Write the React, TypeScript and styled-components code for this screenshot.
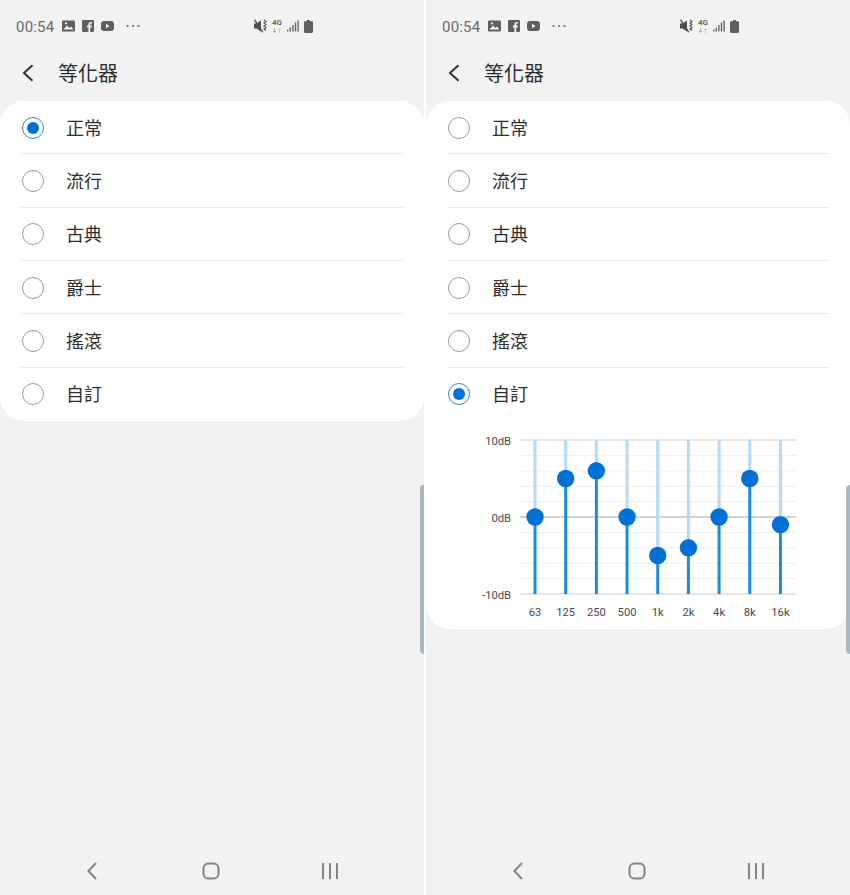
import React from "react";
import styled, { createGlobalStyle } from "styled-components";

const Global = createGlobalStyle`
  html, body { margin: 0; padding: 0; background: #fff; }
  * { box-sizing: border-box; }
`;

const FONT = `Roboto, "Noto Sans CJK TC", "Liberation Sans", sans-serif`;

const Stage = styled.div`
  width: 850px;
  height: 895px;
  display: flex;
  justify-content: space-between;
  background: #fff;
  font-family: ${FONT};
  overflow: hidden;
`;
const Phone = styled.div`
  position: relative;
  width: 424px;
  height: 895px;
  background: #f2f2f2;
  display: flex;
  flex-direction: column;
`;
const StatusBar = styled.div`
  height: 52px;
  display: flex;
  align-items: center;
  padding-left: 16px;
  color: #666;
`;
const Clock = styled.span`
  font-size: 15px;
  letter-spacing: 0.2px;
  width: 46px;
  color: #6a6a6a;
  margin-top: 2px;
`;
const NotifIcons = styled.div`
  display: flex;
  align-items: center;
  gap: 7px;
  width: 192px;
`;
const SysIcons = styled.div`
  display: flex;
  align-items: center;
  gap: 4px;
`;
const NetType = styled.div`
  width: 12px;
  display: flex;
  flex-direction: column;
  align-items: center;
  gap: 2px;
  font-size: 8px;
  line-height: 7px;
  font-weight: 700;
  color: #6a6a6a;
`;
const Header = styled.div`
  height: 49px;
  display: flex;
  align-items: center;
  padding: 0 0 8px 22px;
`;
const Title = styled.h1`
  margin: 2px 0 0 24px;
  font-size: 20px;
  font-weight: 400;
  color: #2b2b2b;
  line-height: 28px;
`;
const Card = styled.div`
  background: #fff;
  border-radius: 24px;
`;
const Row = styled.div`
  height: 53.33px;
  position: relative;
  display: flex;
  align-items: center;
  padding-left: 22px;
  &:not(:last-of-type)::after {
    content: "";
    position: absolute;
    left: 21px;
    right: 21px;
    bottom: 0;
    height: 1px;
    background: #ebebeb;
  }
`;
const Radio = styled.span<{ $on?: boolean }>`
  width: 22px;
  height: 22px;
  border-radius: 50%;
  border: 1px solid ${(p) => (p.$on ? "#2a87da" : "#9a9a9a")};
  display: flex;
  align-items: center;
  justify-content: center;
  &::after {
    content: "";
    width: 12px;
    height: 12px;
    border-radius: 50%;
    background: ${(p) => (p.$on ? "#0072d6" : "transparent")};
  }
`;
const Label = styled.span`
  margin: 2px 0 0 22px;
  font-size: 18px;
  color: #2e2e2e;
  line-height: 24px;
`;
const ChartSvg = styled.svg`
  display: block;
  width: 424px;
  height: 208.5px;
  font-family: ${FONT};
`;
const ChartText = styled.text`
  font-size: 11.2px;
  fill: #4a4a4a;
`;
const NavBar = styled.div`
  margin-top: auto;
  height: 48px;
  padding-right: 2px;
  display: grid;
  grid-template-columns: repeat(3, 119px);
  justify-content: center;
  align-items: center;
  justify-items: center;
`;
const Handle = styled.div`
  position: absolute;
  right: 0;
  top: 485px;
  width: 4px;
  height: 169px;
  background: #a9b8c0;
  border-radius: 4px 0 0 4px;
`;

const ImageIcon = () => (
  <svg width="13" height="12" viewBox="0 0 13 12">
    <rect x="0" y="0.5" width="13" height="11" rx="1.2" fill="#5f5f5f" />
    <path d="M1.5 9.5 5 5.5l2.4 2.6L9 6.6l2.5 2.9z" fill="#f2f2f2" />
    <circle cx="4" cy="3.4" r="1.1" fill="#f2f2f2" />
  </svg>
);
const FbIcon = () => (
  <svg width="12" height="12" viewBox="0 0 12 12">
    <rect width="12" height="12" rx="1.2" fill="#5f5f5f" />
    <path d="M8.2 12V7.4h1.5l.2-1.8H8.2V4.5c0-.5.2-.9.9-.9h1V2c-.3 0-.8-.1-1.3-.1-1.4 0-2.4.9-2.4 2.4v1.3H4.9v1.8h1.5V12z" fill="#f2f2f2" />
  </svg>
);
const YtIcon = () => (
  <svg width="13" height="10" viewBox="0 0 13 10">
    <rect width="13" height="10" rx="3" fill="#5f5f5f" />
    <path d="M5 2.8 8.6 5 5 7.2z" fill="#f2f2f2" />
  </svg>
);
const DotsIcon = () => (
  <svg width="14" height="4" viewBox="0 0 14 4" style={{ marginLeft: 5 }}>
    <g fill="#6a6a6a">
      <circle cx="1.5" cy="2" r="1.1" />
      <circle cx="7" cy="2" r="1.1" />
      <circle cx="12.5" cy="2" r="1.1" />
    </g>
  </svg>
);
const MuteIcon = () => (
  <svg width="13" height="14" viewBox="0 0 13 14">
    <path d="M0 4.5h2.5L7 1.5v11l-4.500-3H0z" fill="#4f4f4f" />
    <path d="M0.8 1.2 8.500 12.800" stroke="#4f4f4f" strokeWidth="1.400" strokeLinecap="round" />
    <path d="M10 1l2 1.500-2 1.500 2 1.500-2 1.500 2 1.500-2 1.500 2 1.500" fill="none" stroke="#4f4f4f" strokeWidth="1.200" />
  </svg>
);
const NetArrows = () => (
  <svg width="10" height="5" viewBox="0 0 10 5">
    <path d="M2.500 0v4M1 2.800l1.500 1.700L4 2.800" fill="none" stroke="#a8a8a8" strokeWidth="1" />
    <path d="M7.500 5V1M6 2.200 7.500 .5 9 2.200" fill="none" stroke="#c4c4c4" strokeWidth="1" />
  </svg>
);
const SignalIcon = () => (
  <svg width="12" height="12" viewBox="0 0 12 12">
    <g fill="#666">
      <rect x="0" y="9.500" width="1.400" height="2" />
      <rect x="2.600" y="7.500" width="1.400" height="4" />
      <rect x="5.200" y="5" width="1.400" height="6.500" />
      <rect x="7.800" y="2.500" width="1.400" height="9" />
      <rect x="10.400" y="0.500" width="1.400" height="11" />
    </g>
  </svg>
);
const BatteryIcon = () => (
  <svg width="9" height="13" viewBox="0 0 9 13" style={{ marginLeft: 1 }}>
    <path d="M3 0h3v1.200h1.800c.7 0 1.200.5 1.200 1.200v9.400c0 .7-.5 1.200-1.200 1.200H1.200C.5 13 0 12.500 0 11.800V2.400c0-.7.5-1.200 1.200-1.200H3z" fill="#5f5f5f" />
  </svg>
);
const BackIcon = () => (
  <svg width="12" height="18" viewBox="0 0 12 18">
    <path d="M10.500 1.200 2 9l8.500 7.800" fill="none" stroke="#333" strokeWidth="2" />
  </svg>
);
const NavBack = () => (
  <svg width="12" height="18" viewBox="0 0 12 18">
    <path d="M10 1 2.400 9l7.600 8" fill="none" stroke="#858585" strokeWidth="2" />
  </svg>
);
const NavHome = () => (
  <svg width="18" height="18" viewBox="0 0 18 18">
    <rect x="1.500" y="1.500" width="15" height="15" rx="5" fill="none" stroke="#858585" strokeWidth="2" />
  </svg>
);
const NavRecent = () => (
  <svg width="16" height="16" viewBox="0 0 16 16">
    <g fill="#858585">
      <rect x="0" width="2" height="16" />
      <rect x="7" width="2" height="16" />
      <rect x="14" width="2" height="16" />
    </g>
  </svg>
);

const BANDS: [string, number][] = [
  ["63", 0], ["125", 5], ["250", 6], ["500", 0], ["1k", -5],
  ["2k", -4], ["4k", 0], ["8k", 5], ["16k", -1],
];
const X0 = 109;
const DX = 30.68;
const TOP = 19;
const MID = 96;
const BOT = 173;
const yOf = (db: number) => MID - db * 7.7;

const EqChart = () => (
  <ChartSvg viewBox="0 0 424 208.500">
    {Array.from({ length: 11 }, (_, i) => {
      const y = TOP + i * 15.4;
      const major = i === 0 || i === 10;
      return (
        <line
          key={i}
          x1="94"
          x2="370"
          y1={y}
          y2={y}
          stroke={i === 5 ? "#c4c4c4" : major ? "#cbcbce" : "#eeeeee"}
          strokeWidth={i === 5 ? 1.5 : 1}
        />
      );
    })}
    <ChartText x="85" y={TOP + 5} textAnchor="end">10dB</ChartText>
    <ChartText x="85" y={MID + 5} textAnchor="end">0dB</ChartText>
    <ChartText x="85" y={BOT + 5} textAnchor="end">-10dB</ChartText>
    {BANDS.map(([name, db], i) => {
      const x = X0 + i * DX;
      const y = yOf(db);
      return (
        <g key={name}>
          <line x1={x} x2={x} y1={TOP} y2={y} stroke="#b6daf8" strokeWidth="3" />
          <line x1={x} x2={x} y1={y} y2={BOT} stroke="#1a8ae6" strokeWidth="3" />
          <circle cx={x} cy={y} r="8.700" fill="#0071d5" />
          <ChartText x={x} y="195" textAnchor="middle">{name}</ChartText>
        </g>
      );
    })}
  </ChartSvg>
);

const PRESETS = ["正常", "流行", "古典", "爵士", "搖滾", "自訂"];

const Screen = ({ selected, chart }: { selected: string; chart?: boolean }) => (
  <Phone>
    <StatusBar>
      <Clock>00:54</Clock>
      <NotifIcons>
        <ImageIcon />
        <FbIcon />
        <YtIcon />
        <DotsIcon />
      </NotifIcons>
      <SysIcons>
        <MuteIcon />
        <NetType>
          4G
          <NetArrows />
        </NetType>
        <SignalIcon />
        <BatteryIcon />
      </SysIcons>
    </StatusBar>
    <Header>
      <BackIcon />
      <Title>等化器</Title>
    </Header>
    <Card>
      {PRESETS.map((p) => (
        <Row key={p}>
          <Radio $on={p === selected} />
          <Label>{p}</Label>
        </Row>
      ))}
      {chart && <EqChart />}
    </Card>
    <NavBar>
      <NavBack />
      <NavHome />
      <NavRecent />
    </NavBar>
    <Handle />
  </Phone>
);

export default function App() {
  return (
    <Stage>
      <Global />
      <Screen selected="正常" />
      <Screen selected="自訂" chart />
    </Stage>
  );
}
